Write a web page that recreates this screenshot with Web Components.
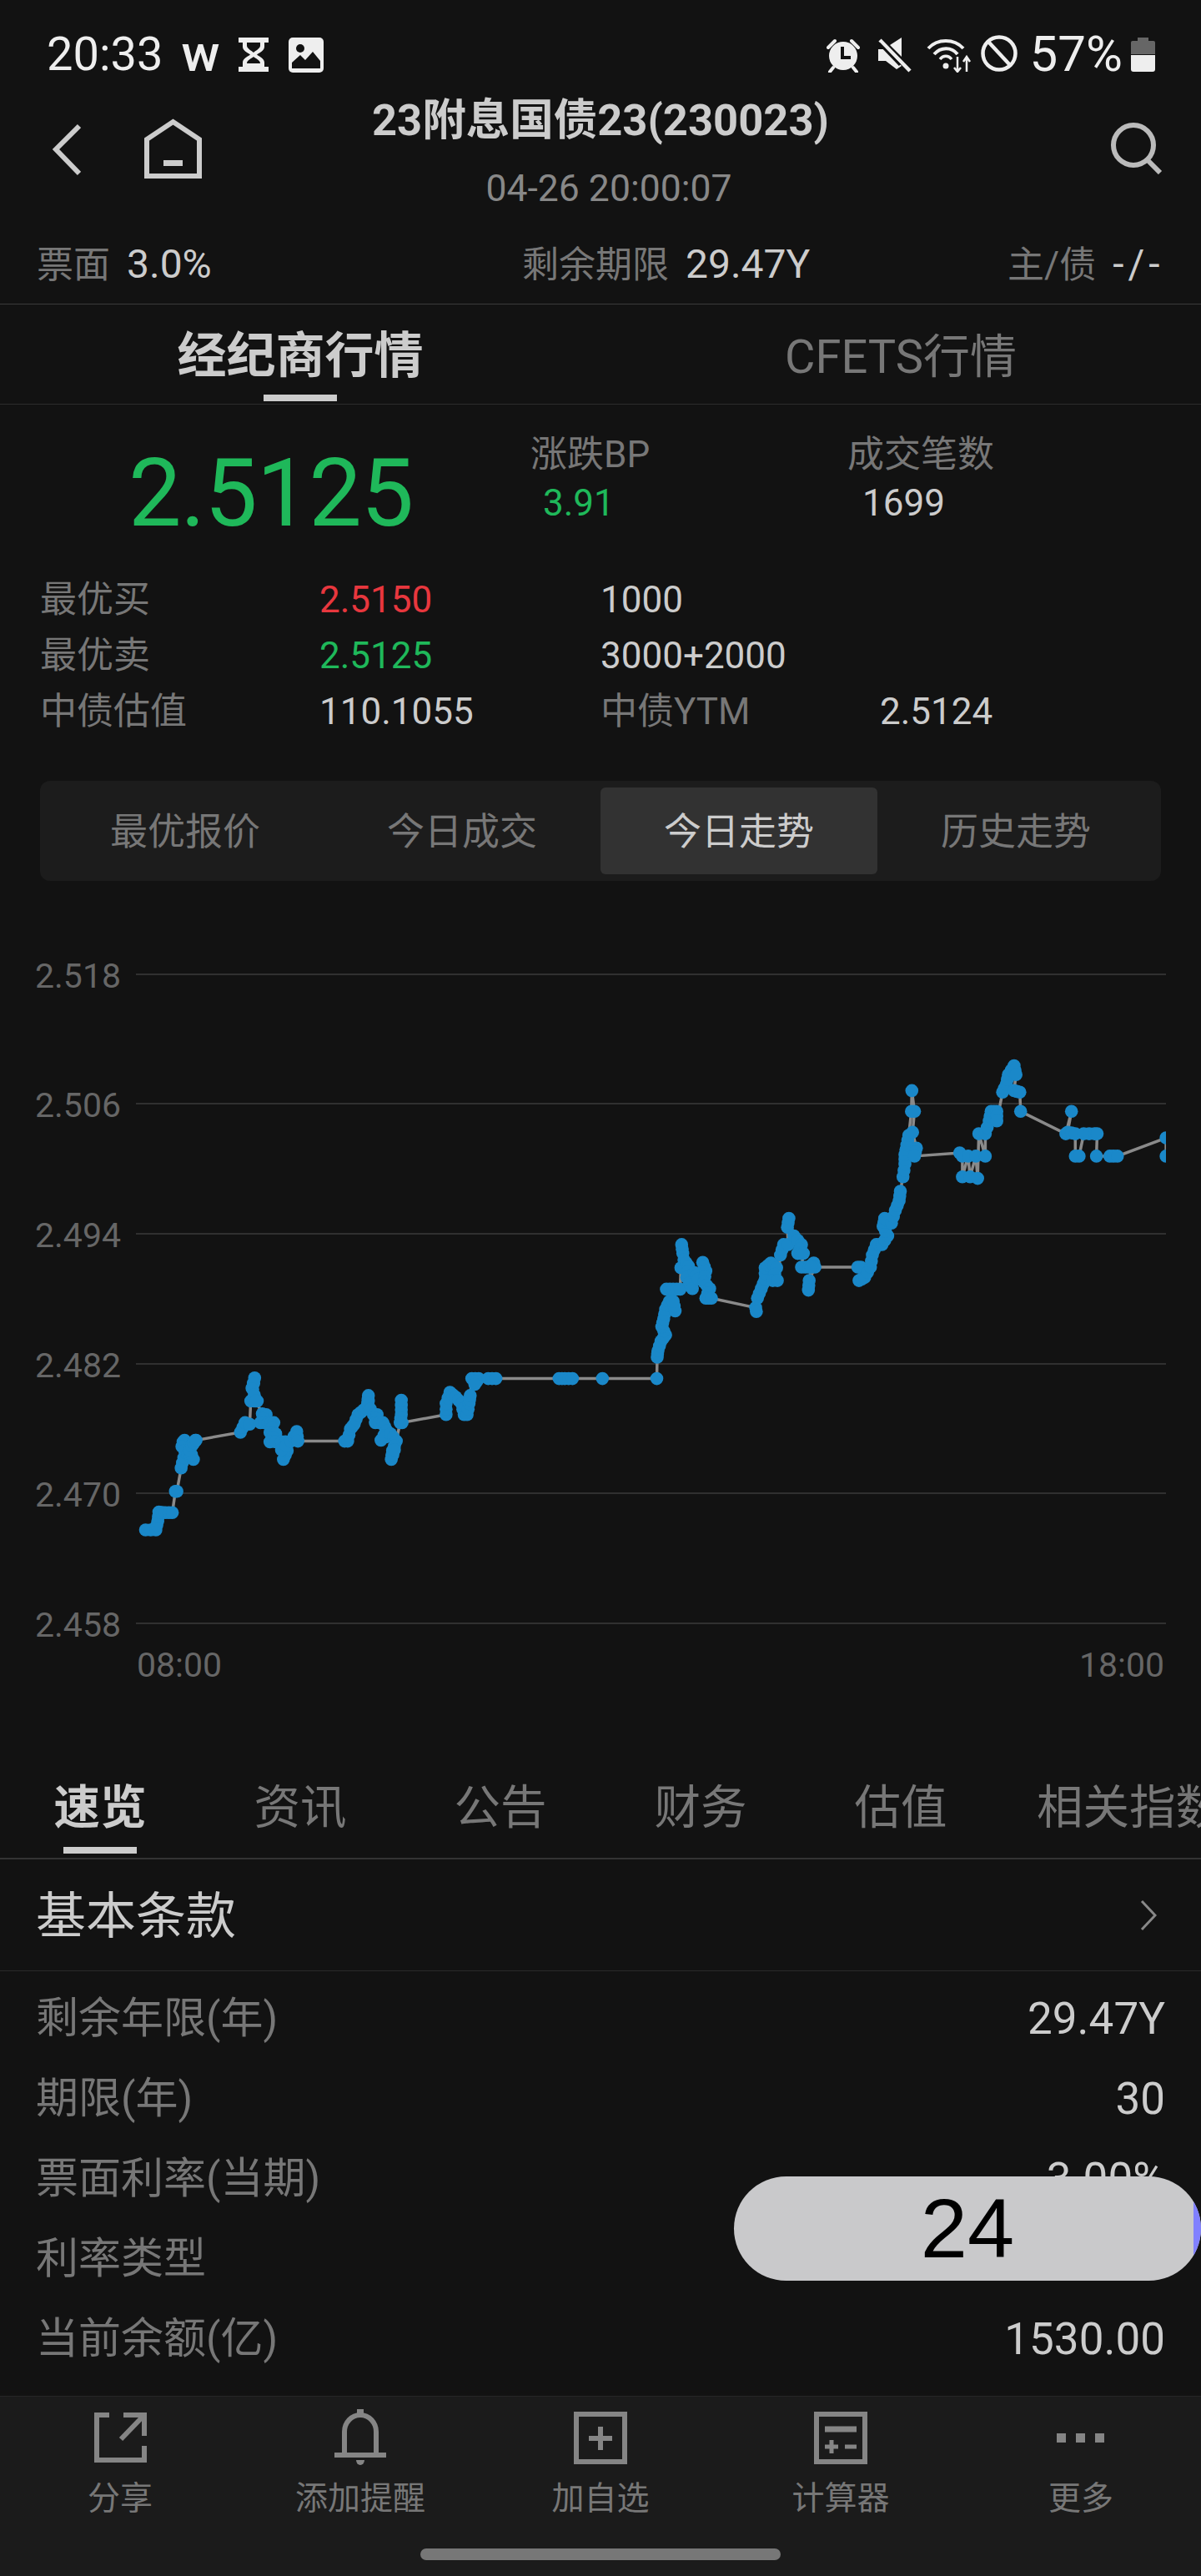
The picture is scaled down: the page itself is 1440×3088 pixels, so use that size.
<!DOCTYPE html>
<html lang="zh-CN">
<head>
<meta charset="utf-8">
<title>23附息国债23</title>
<style>
    html, body { margin: 0; padding: 0; background: #121212; }
    body {
        width: 1440px;
        height: 3088px;
        overflow: hidden;
        position: relative;
        display: flex;
        flex-direction: column;
        font-family: Roboto, "Noto Sans CJK SC", sans-serif;
        color: #ccc;
    }
</style>
</head>
<body>
<status-bar></status-bar>
<nav-header code="23附息国债23(230023)" time="04-26 20:00:07"></nav-header>
<info-strip></info-strip>
<quote-tabs></quote-tabs>
<quote-summary></quote-summary>
<seg-tabs></seg-tabs>
<trend-chart></trend-chart>
<detail-tabs></detail-tabs>
<terms-list>
    <term-row label="剩余年限(年)" value="29.47Y"></term-row>
    <term-row label="期限(年)" value="30"></term-row>
    <term-row label="票面利率(当期)" value="3.00%"></term-row>
    <term-row label="利率类型" value=""></term-row>
    <term-row label="当前余额(亿)" value="1530.00"></term-row>
</terms-list>
<action-bar>
    <bar-action label="分享">
        <svg width="63" height="60" viewBox="0 0 63 60" fill="none" stroke="#858585" stroke-width="6"><path d="M18 3H3V57H60V40"/><path d="M32 32L59 4"/><path d="M35 3H60V28"/></svg>
    </bar-action>
    <bar-action label="添加提醒">
        <svg width="62" height="68" viewBox="0 0 62 68" fill="none" stroke="#858585" stroke-width="6"><path d="M12 54V27a19 20 0 0 1 38 0V54"/><path d="M0 55H62"/><rect x="27" y="0" width="8" height="8" fill="#858585" stroke="none"/><path d="M26 61h10a5 6 0 0 1-10 0z" fill="#858585" stroke="none"/></svg>
    </bar-action>
    <bar-action label="加自选">
        <svg width="64" height="63" viewBox="0 0 64 63" fill="none" stroke="#858585" stroke-width="6"><rect x="3" y="3" width="58" height="57"/><path d="M18 32H46M32 18V46"/></svg>
    </bar-action>
    <bar-action label="计算器">
        <svg width="64" height="63" viewBox="0 0 64 63" fill="none" stroke="#858585" stroke-width="6"><rect x="3" y="3" width="58" height="57"/><path d="M13 21H51" stroke-width="7"/><path d="M13 42H29M21 34V50M37 42H51" stroke-width="5"/></svg>
    </bar-action>
    <bar-action label="更多">
        <svg width="58" height="68" viewBox="0 0 58 68" fill="#858585"><rect x="0" y="29" width="11" height="11"/><rect x="23" y="29" width="11" height="11"/><rect x="46" y="29" width="11" height="11"/></svg>
    </bar-action>
</action-bar>
<count-toast>24</count-toast>

<script>
class StatusBar extends HTMLElement {
    constructor() {
        super();
        this.attachShadow({ mode: 'open' });
    }

    connectedCallback() {
        this.shadowRoot.innerHTML = `
            <style>
                :host { display: block; height: 108px; color: #eee; }
                .bar { display: flex; align-items: flex-start; padding: 42px 55px 0 56px; }
                .time { font-size: 56px; line-height: 46px; }
                .w { font-size: 62px; line-height: 44px; font-weight: 500; margin-left: 22px; margin-right: 23px; }
                .left { display: flex; align-items: flex-start; gap: 24px; margin-top: 3px; }
                .right { margin-left: auto; display: flex; align-items: flex-start; }
                .pct { font-size: 60px; line-height: 46px; margin: 0 10px 0 15px; }
                svg { display: block; }
            </style>
            <div class="bar">
                <span class="time">20:33</span>
                <span class="w">w</span>
                <div class="left">
                    <svg width="36" height="41" viewBox="0 0 36 41"><path fill="#eee" d="M0 0H36V6H31V11C31 16 25 18 22 20.500C25 23 31 25 31 30V35H36V41H0V35H5V30C5 25 11 23 14 20.500C11 18 5 16 5 11V6H0Z"/><path fill="#121212" d="M10 6H26V10C26 13 20 16 18 18C16 16 10 13 10 10Z"/><path fill="#121212" d="M18 23C20 25 26 27 26 31H10C10 27 16 25 18 23Z"/></svg>
                    <svg width="42" height="42" viewBox="0 0 42 42"><rect width="42" height="42" rx="5" fill="#eee"/><circle cx="14" cy="13" r="5" fill="#121212"/><path fill="#121212" d="M4 37V30L14 21L20 27L29 17L38 28V37Z"/></svg>
                </div>
                <div class="right">
                    <svg width="40" height="42" viewBox="0 0 40 42" style="margin-top:3px;margin-right:22px"><circle cx="20" cy="22" r="17" fill="#eee"/><path d="M19 11V24H29" fill="none" stroke="#121212" stroke-width="4"/><path d="M2 12L10 4M38 12L30 4M8 36L4 41M32 36L36 41" stroke="#eee" stroke-width="4" stroke-linecap="round"/></svg>
                    <svg width="40" height="42" viewBox="0 0 40 42" style="margin-top:3px;margin-right:18px"><path fill="#eee" d="M0 14H8L28 34L22 38L9 28H0ZM14 9L28 0V23Z"/><path d="M2 3L38 40" stroke="#eee" stroke-width="4.500"/><path d="M1 7L26 33" stroke="#121212" stroke-width="3"/></svg>
                    <svg width="55" height="44" viewBox="0 0 55 44" fill="none" stroke="#eee" style="margin-top:1px;margin-right:10px"><path stroke-width="4" d="M2 15C13 3 33 3 44 15"/><path stroke-width="4" d="M9 22C17 13 30 13 37 22"/><path stroke-width="3.500" d="M16 28C20 23 26 23 30 28"/><circle cx="23" cy="36" r="3.500" fill="#eee" stroke="none"/><path stroke-width="2.500" d="M37 25V42M33 38L37 43L41 38M48 43V26M44 31L48 25L52 31"/></svg>
                    <svg width="44" height="44" viewBox="0 0 44 44" fill="none" stroke="#eee" stroke-width="4.500"><circle cx="22" cy="22" r="19.500"/><path d="M9 8L35 36"/></svg>
                    <span class="pct">57%</span>
                    <svg width="29" height="41" viewBox="0 0 29 41" style="margin-top:3px"><path fill="#666" d="M8 0H21V4H27A2 2 0 0 1 29 6V20H0V6A2 2 0 0 1 2 4H8Z"/><path fill="#eee" d="M0 21H29V38A3 3 0 0 1 26 41H3A3 3 0 0 1 0 38Z"/></svg>
                </div>
            </div>
        `;
    }
}

class NavHeader extends HTMLElement {
    constructor() {
        super();
        this.attachShadow({ mode: 'open' });
    }

    connectedCallback() {
        this.shadowRoot.innerHTML = `
            <style>
                :host { display: block; height: 156px; }
                .row { display: grid; grid-template-columns: 1fr auto 1fr; }
                .left { display: flex; align-items: flex-start; gap: 76px; padding: 34px 0 0 62px; }
                .mid { text-align: center; }
                .title { font-size: 52.500px; line-height: 70px; font-weight: 700; color: #ccc; margin-top: 1px; }
                .time { font-size: 44.500px; line-height: 50px; color: #888; margin-top: 22px; padding-left: 20px; }
                .right { display: flex; justify-content: flex-end; padding: 38px 46px 0 0; }
                svg { display: block; }
            </style>
            <div class="row">
                <div class="left">
                    <svg width="35" height="66" viewBox="0 0 35 66" style="margin-top:4px" fill="none" stroke="#ccc" stroke-width="6"><path d="M33 5L5 33L33 62"/></svg>
                    <svg width="69" height="72" viewBox="0 0 69 72" fill="none" stroke="#ccc" stroke-width="6"><path d="M3 69V25L34.500 4L66 25V69Z"/><rect x="23" y="50" width="23" height="7" fill="#ccc" stroke="none"/></svg>
                </div>
                <div class="mid">
                    <div class="title">${this.getAttribute('code')}</div>
                    <div class="time">${this.getAttribute('time')}</div>
                </div>
                <div class="right">
                    <svg width="63" height="63" viewBox="0 0 63 63" fill="none" stroke="#bbb" stroke-width="6"><circle cx="28" cy="28" r="24"/><path d="M45 46L60 61"/></svg>
                </div>
            </div>
        `;
    }
}

class InfoStrip extends HTMLElement {
    constructor() {
        super();
        this.attachShadow({ mode: 'open' });
    }

    connectedCallback() {
        this.shadowRoot.innerHTML = `
            <style>
                :host { display: block; height: 100px; border-bottom: 1px solid #3a3a3a; }
                .row {
                    display: grid;
                    grid-template-columns: 582px 582px 1fr;
                    padding: 29px 44px 0;
                    font-size: 44px;
                    line-height: 48px;
                    white-space: nowrap;
                }
                .k { color: #777; margin-right: 20px; }
                .v { color: #ccc; font-size: 48px; }
                .dash { letter-spacing: 5px; }
            </style>
            <div class="row">
                <div><span class="k">票面</span><span class="v">3.0%</span></div>
                <div><span class="k">剩余期限</span><span class="v">29.47Y</span></div>
                <div><span class="k">主/债</span><span class="v dash">-/-</span></div>
            </div>
        `;
    }
}

class QuoteTabs extends HTMLElement {
    constructor() {
        super();
        this.attachShadow({ mode: 'open' });
    }

    connectedCallback() {
        this.shadowRoot.innerHTML = `
            <style>
                :host { display: block; height: 119px; border-bottom: 1px solid #2c2c2c; }
                .row { display: grid; grid-template-columns: 720px 720px; }
                .tab { text-align: center; padding-top: 26px; font-size: 59px; line-height: 72px; color: #777; position: relative; height: 119px; box-sizing: border-box; }
                .tab.on { font-weight: 700; color: #ccc; }
                .tab.on::after { content: ''; position: absolute; left: 316px; width: 88px; top: 108px; height: 8px; background: #ccc; }
                .tab.off { font-size: 56px; padding-top: 27px; }
            </style>
            <div class="row">
                <div class="tab on"><span>经纪商行情</span></div>
                <div class="tab off"><span>CFETS行情</span></div>
            </div>
        `;
    }
}

class QuoteSummary extends HTMLElement {
    constructor() {
        super();
        this.attachShadow({ mode: 'open' });
    }

    connectedCallback() {
        this.shadowRoot.innerHTML = `
            <style>
                :host { display: block; height: 451px; }
                .top { display: grid; grid-template-columns: 482px 380px 1fr; padding: 32px 0 0 154px; height: 194px; box-sizing: border-box; }
                .big { font-size: 113px; line-height: 130px; color: #1fb85a; margin-top: 10px; letter-spacing: -1px; }
                .k { font-size: 44px; line-height: 56px; color: #777; }
                .v { font-size: 44px; line-height: 52px; color: #ccc; padding-left: 18px; margin-top: 4px; }
                .v.green { padding-left: 15px; }
                .green { color: #1fb85a; }
                .red { color: #e8373e; }
                .rows {
                    display: grid;
                    grid-template-columns: 335px 337px 335px 1fr;
                    grid-auto-rows: 67px;
                    padding-left: 48px;
                    font-size: 44px;
                    line-height: 67px;
                    margin-top: 7px;
                }
                .rows .l { color: #777; }
                .rows .n { color: #ccc; }
            </style>
            <div class="top">
                <div class="big">2.5125</div>
                <div><div class="k">涨跌BP</div><div class="v green">3.91</div></div>
                <div><div class="k">成交笔数</div><div class="v">1699</div></div>
            </div>
            <div class="rows">
                <span class="l">最优买</span><span class="red">2.5150</span><span class="n">1000</span><span></span>
                <span class="l">最优卖</span><span class="green">2.5125</span><span class="n">3000+2000</span><span></span>
                <span class="l">中债估值</span><span class="n">110.1055</span><span class="l">中债YTM</span><span class="n">2.5124</span>
            </div>
        `;
    }
}

class SegTabs extends HTMLElement {
    constructor() {
        super();
        this.attachShadow({ mode: 'open' });
    }

    connectedCallback() {
        const items = ['最优报价', '今日成交', '今日走势', '历史走势'];
        this.shadowRoot.innerHTML = `
            <style>
                :host { display: block; margin: 0 48px; height: 120px; }
                .box {
                    display: grid;
                    grid-template-columns: repeat(4, 1fr);
                    padding: 8px;
                    height: 120px;
                    box-sizing: border-box;
                    background: #1c1c1c;
                    border-radius: 12px;
                }
                .it { display: flex; align-items: center; justify-content: center; font-size: 45px; line-height: 50px; padding-top: 3px; box-sizing: border-box; color: #777; border-radius: 6px; }
                .it.on { background: #323232; color: #ccc; }
            </style>
            <div class="box">
                ${items.map((t, i) => `<div class="it${i === 2 ? ' on' : ''}">${t}</div>`).join('')}
            </div>
        `;
    }
}

// points read off the picture, [x, y] in page pixels once mapped by left()/right()
const left = ([x, y]) => [x / 2.178, 1250 + y / 2.613];
const right = ([x, y]) => [720 + x / 2.178, 1250 + y / 2.613];

const LEFT_POINTS = [
    [380,1526],[407,1526],[412,1498],[415,1470],[432,1472],[450,1472],[458,1405],[462,1405],[473,1332],[480,1300],
    [478,1250],[482,1245],[475,1265],[490,1290],[505,1305],[495,1275],[510,1245],[500,1262],[512,1245],
    [628,1220],[640,1190],[652,1195],[655,1122],[672,1122],[658,1082],[665,1050],[660,1085],[668,1122],[685,1162],
    [695,1165],[680,1190],[700,1190],[715,1190],[705,1220],[720,1225],[705,1250],[735,1250],[745,1250],[740,1305],
    [750,1278],[735,1275],[760,1248],[775,1218],[778,1248],
    [900,1248],[908,1248],[915,1210],[925,1195],[935,1165],[950,1150],[962,1140],[962,1105],[960,1130],[975,1165],
    [985,1165],[980,1190],[1000,1190],[1010,1215],[995,1245],[1020,1225],[1035,1248],[1025,1278],[1022,1305],
    [1030,1275],[1045,1190],[1048,1165],[1048,1135],[1048,1120],[1050,1190],
    [1165,1165],[1165,1130],[1175,1095],[1190,1110],[1205,1130],[1212,1165],[1220,1165],[1225,1130],[1228,1105],
    [1232,1052],[1250,1052],[1240,1070],[1275,1052],[1295,1052],
    [1460,1052],[1475,1052],[1495,1052],[1568,1052]
].map(left);

const RIGHT_POINTS = [
    [5,1052],[147,1052],[148,985],[150,965],[158,935],[170,915],[160,890],[165,865],[170,835],[180,810],[195,840],
    [190,810],[172,772],[190,772],[208,772],[210,705],[215,660],[212,632],[218,680],[230,700],[225,735],[240,770],
    [245,720],[255,740],[267,688],[275,715],[270,750],[285,770],[275,800],[290,800],
    [405,830],[407,842],[410,800],[420,770],[430,740],[430,705],[445,690],[460,705],[450,745],[462,745],[470,665],
    [478,632],[490,632],[488,578],[492,550],[505,605],[525,632],[515,660],[530,660],[525,703],[545,703],[557,690],
    [560,703],[545,745],[543,775],[550,703],
    [672,703],[680,703],[675,745],[690,735],[705,703],[710,665],[720,632],[735,632],[750,605],[738,575],[742,550],
    [760,565],[770,525],[780,495],[783,465],[790,420],[795,380],[795,350],[800,320],[805,290],[812,215],[813,150],
    [820,215],[815,280],[825,330],[820,355],
    [938,345],[945,355],[945,420],[960,355],[965,420],[980,355],[985,425],[988,285],[1005,355],[1005,285],[1015,245],
    [1020,215],[1035,215],[1035,245],[1050,155],[1060,130],[1065,100],[1080,72],[1085,100],[1080,150],[1095,155],[1097,215],
    [1215,285],[1230,215],[1220,280],[1240,285],[1240,355],[1250,355],[1262,285],[1290,285],[1297,285],[1295,355],
    [1330,355],[1350,355],[1477,298],[1477,355]
].map(right);

class TrendChart extends HTMLElement {
    constructor() {
        super();
        this.attachShadow({ mode: 'open' });
    }

    connectedCallback() {
        const grid = [
            ['2.518', 1168], ['2.506', 1323], ['2.494', 1479],
            ['2.482', 1635], ['2.470', 1790], ['2.458', 1946]
        ];
        const pts = LEFT_POINTS.concat(RIGHT_POINTS);
        // ticks are dense inside a cluster: fill short hops with dots, skip the long quiet runs
        const dots = [];
        pts.forEach((p, i) => {
            if (p[0] > 716 && p[0] < 722) return;
            dots.push(p);
            const q = pts[i + 1];
            if (!q) return;
            const dist = Math.hypot(q[0] - p[0], q[1] - p[1]);
            if (dist > 6 && dist < 16) {
                dots.push([(p[0] + q[0]) / 2, (p[1] + q[1]) / 2]);
            }
        });
        this.shadowRoot.innerHTML = `
            <style>
                :host { display: block; height: 994px; }
                svg { display: block; }
                text { font-family: Roboto, sans-serif; font-size: 41px; fill: #666; }
            </style>
            <svg width="1440" height="994" viewBox="0 1056 1440 994">
                <defs><clipPath id="plot"><rect x="163" y="1100" width="1235" height="900"/></clipPath></defs>
                ${grid.map(([t, y]) => `
                    <line x1="163" x2="1398" y1="${y}" y2="${y}" stroke="#303030" stroke-width="2"/>
                    <text x="42" y="${y + 16}">${t}</text>
                `).join('')}
                <text x="164" y="2010">08:00</text>
                <text x="1396" y="2010" text-anchor="end">18:00</text>
                <g clip-path="url(#plot)">
                    <polyline fill="none" stroke="#8a8a8a" stroke-width="3.500" points="${pts.map(p => p.map(n => n.toFixed(1)).join(',')).join(' ')}"/>
                    <g fill="#1a88c9">
                        ${dots.map(p => `<circle cx="${p[0].toFixed(1)}" cy="${p[1].toFixed(1)}" r="7.800"/>`).join('')}
                    </g>
                </g>
            </svg>
        `;
    }
}

class DetailTabs extends HTMLElement {
    constructor() {
        super();
        this.attachShadow({ mode: 'open' });
    }

    connectedCallback() {
        const items = ['速览', '资讯', '公告', '财务', '估值'];
        this.shadowRoot.innerHTML = `
            <style>
                :host { display: block; height: 177px; border-bottom: 2px solid #333; overflow: hidden; }
                .row { display: flex; padding-top: 83px; font-size: 55.500px; line-height: 70px; color: #777; white-space: nowrap; }
                .t { flex: none; width: 240px; text-align: center; position: relative; height: 94px; }
                .t.on { color: #ccc; font-weight: 700; }
                .t.on::after { content: ''; position: absolute; left: 76px; width: 88px; top: 81px; height: 8px; background: #ccc; }
                .more { flex: none; padding-left: 43px; }
            </style>
            <div class="row">
                ${items.map((t, i) => `<div class="t${i === 0 ? ' on' : ''}">${t}</div>`).join('')}
                <div class="more">相关指数</div>
            </div>
        `;
    }
}

class TermsList extends HTMLElement {
    constructor() {
        super();
        this.attachShadow({ mode: 'open' });
    }

    connectedCallback() {
        this.shadowRoot.innerHTML = `
            <style>
                :host { display: block; height: 643px; }
                .head {
                    display: flex;
                    align-items: center;
                    justify-content: space-between;
                    height: 133px;
                    padding: 0 53px 0 43px;
                    border-bottom: 1px solid #2a2a2a;
                    font-size: 60px;
                    color: #ccc;
                }
                .head span { position: relative; top: -4px; }
                .rows { padding-top: 9px; }
                svg { display: block; }
            </style>
            <div class="head">
                <span>基本条款</span>
                <svg width="20" height="38" viewBox="0 0 20 38" fill="none" stroke="#888" stroke-width="3"><path d="M2 2L18 19L2 36"/></svg>
            </div>
            <div class="rows"><slot></slot></div>
        `;
    }
}

class TermRow extends HTMLElement {
    constructor() {
        super();
        this.attachShadow({ mode: 'open' });
    }

    connectedCallback() {
        this.shadowRoot.innerHTML = `
            <style>
                :host { display: flex; align-items: center; justify-content: space-between; height: 96px; padding: 0 43px; }
                .l { font-size: 51px; line-height: 60px; color: #777; }
                .v { font-size: 53px; line-height: 60px; color: #ccc; }
            </style>
            <span class="l">${this.getAttribute('label')}</span>
            <span class="v">${this.getAttribute('value')}</span>
        `;
    }
}

class ActionBar extends HTMLElement {
    constructor() {
        super();
        this.attachShadow({ mode: 'open' });
    }

    connectedCallback() {
        this.shadowRoot.innerHTML = `
            <style>
                :host { display: block; height: 216px; box-sizing: border-box; background: #1b1b1b; border-top: 1px solid #262626; }
                .items { display: grid; grid-template-columns: repeat(5, 1fr); padding-top: 15px; }
                .home { width: 432px; height: 14px; margin: 38px auto 0; border-radius: 7px; background: #777; }
            </style>
            <div class="items"><slot></slot></div>
            <div class="home"></div>
        `;
    }
}

class BarAction extends HTMLElement {
    constructor() {
        super();
        this.attachShadow({ mode: 'open' });
    }

    connectedCallback() {
        this.shadowRoot.innerHTML = `
            <style>
                :host { display: flex; flex-direction: column; align-items: center; }
                .icon { height: 68px; display: flex; align-items: center; }
                .label { font-size: 39px; line-height: 44px; color: #777; margin-top: 17px; }
            </style>
            <div class="icon"><slot></slot></div>
            <div class="label">${this.getAttribute('label')}</div>
        `;
    }
}

class CountToast extends HTMLElement {
    constructor() {
        super();
        this.attachShadow({ mode: 'open' });
    }

    connectedCallback() {
        this.shadowRoot.innerHTML = `
            <style>
                :host {
                    position: absolute;
                    left: 880px;
                    top: 2609px;
                    width: 560px;
                    height: 125px;
                    border-radius: 63px;
                    overflow: hidden;
                    background: #c9c9cb;
                    display: flex;
                    align-items: center;
                    justify-content: center;
                    font-family: "Liberation Sans", sans-serif;
                    font-size: 101px;
                    color: #000;
                }
                .edge { position: absolute; right: 0; top: 0; bottom: 0; width: 9px; background: #8080ff; }
            </style>
            <slot></slot>
            <div class="edge"></div>
        `;
    }
}

customElements.define('status-bar', StatusBar);
customElements.define('nav-header', NavHeader);
customElements.define('info-strip', InfoStrip);
customElements.define('quote-tabs', QuoteTabs);
customElements.define('quote-summary', QuoteSummary);
customElements.define('seg-tabs', SegTabs);
customElements.define('trend-chart', TrendChart);
customElements.define('detail-tabs', DetailTabs);
customElements.define('terms-list', TermsList);
customElements.define('term-row', TermRow);
customElements.define('action-bar', ActionBar);
customElements.define('bar-action', BarAction);
customElements.define('count-toast', CountToast);
</script>
</body>
</html>
